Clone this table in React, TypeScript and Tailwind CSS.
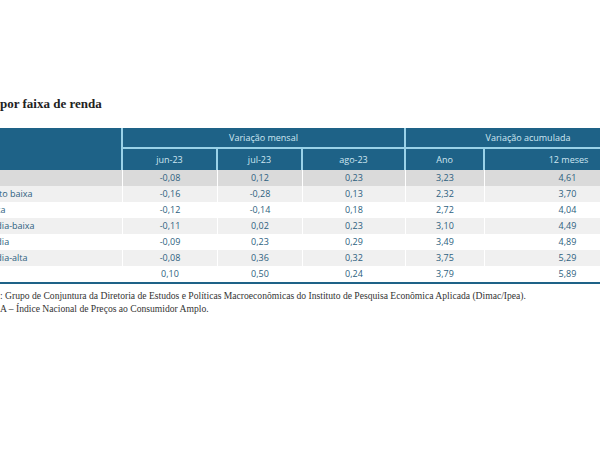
import React from "react";

const rows = [
  { label: "IPCA", v: ["-0,08", "0,12", "0,23", "3,23", "4,61"] },
  { label: "Renda muito baixa", v: ["-0,16", "-0,28", "0,13", "2,32", "3,70"] },
  { label: "Renda baixa", v: ["-0,12", "-0,14", "0,18", "2,72", "4,04"] },
  { label: "Renda média-baixa", v: ["-0,11", "0,02", "0,23", "3,10", "4,49"] },
  { label: "Renda média", v: ["-0,09", "0,23", "0,29", "3,49", "4,89"] },
  { label: "Renda média-alta", v: ["-0,08", "0,36", "0,32", "3,75", "5,29"] },
  { label: "Renda alta", v: ["0,10", "0,50", "0,24", "3,79", "5,89"] },
];

const widths = ["w-[95px]", "w-[85px]", "w-[103px]", "w-[79px]", "w-[165px]"];

function Cut({ hidden, children }: { hidden: string; children: React.ReactNode }) {
  // the screenshot is cropped on the left, the start of the line sits outside the frame
  return (
    <span className="relative whitespace-nowrap">
      <span className="absolute right-full top-0 whitespace-pre">{hidden}</span>
      {children}
    </span>
  );
}

export default function App() {
  return (
    <div className="w-[600px] h-[450px] overflow-hidden bg-white">
      <div className="pt-[96px] text-[13px] font-bold leading-[16px] text-[#222] [font-family:'Liberation_Serif',serif]">
        <Cut hidden="Tabela 1 – Inflação ">por faixa de renda</Cut>
      </div>

      <div className="mt-[16px] ml-[-58px] w-[710px] [font-family:'Open_Sans',sans-serif] text-[9px]">
        <div className="flex h-[42px] bg-[#1e6287] text-[#cfe7f2]">
          <div className="w-[181px] border-r-2 border-[#9ad2e8]" />
          <div className="flex w-[283px] flex-col border-r-2 border-[#9ad2e8]">
            <div className="flex h-[21px] items-center justify-center border-b-2 border-[#9ad2e8]">Variação mensal</div>
            <div className="flex flex-1">
              <div className="flex w-[95px] items-center justify-center border-r-2 border-[#9ad2e8]">jun-23</div>
              <div className="flex w-[85px] items-center justify-center border-r-2 border-[#9ad2e8]">jul-23</div>
              <div className="flex flex-1 items-center justify-center">ago-23</div>
            </div>
          </div>
          <div className="flex flex-1 flex-col">
            <div className="flex h-[21px] items-center justify-center border-b-2 border-[#9ad2e8] pr-[2px]">Variação acumulada</div>
            <div className="flex flex-1">
              <div className="flex w-[79px] items-center justify-center border-r-2 border-[#9ad2e8]">Ano</div>
              <div className="flex flex-1 items-center justify-center">12 meses</div>
            </div>
          </div>
        </div>

        <div className="border-b-2 border-[#1e6287]">
          {rows.map((r, i) => (
            <div
              key={r.label}
              className={`flex h-[16px] items-center text-[#2d5f7e] ${
                i === 0 ? "bg-[#dadada]" : i % 2 === 1 ? "bg-[#f0f0f0]" : "bg-white"
              }`}
            >
              <div className="flex h-full w-[181px] items-center border-r border-white pl-[12px]">{r.label}</div>
              {r.v.map((v, j) => (
                <div
                  key={j}
                  className={`flex h-full items-center justify-center ${widths[j]} ${
                    j < 4 ? "border-r border-white" : ""
                  }`}
                >
                  {v}
                </div>
              ))}
            </div>
          ))}
        </div>
      </div>

      <div className="mt-[5px] text-[9.6px] leading-[13px] text-[#333] [font-family:'Liberation_Serif',serif]">
        <div>
          <Cut hidden="Fonte">
            : Grupo de Conjuntura da Diretoria de Estudos e Políticas Macroeconômicas do Instituto de Pesquisa Econômica Aplicada (Dimac/Ipea).
          </Cut>
        </div>
        <div>
          <Cut hidden="Obs.: IPC">A – Índice Nacional de Preços ao Consumidor Amplo.</Cut>
        </div>
      </div>
    </div>
  );
}
